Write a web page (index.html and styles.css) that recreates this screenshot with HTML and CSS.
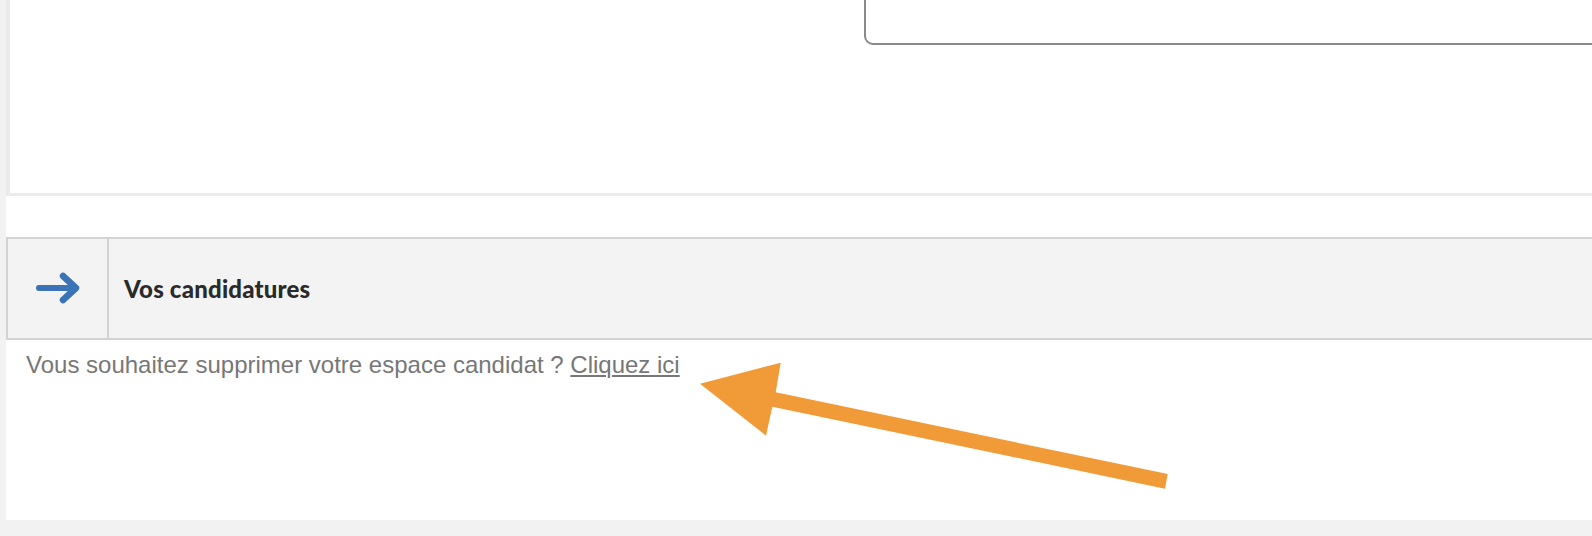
FILE: index.html
```html
<!DOCTYPE html>
<html lang="fr">
<head>
<meta charset="utf-8">
<title>Espace candidat</title>
<link rel="stylesheet" href="styles.css">
</head>
<body>
<div class="page">
  <section class="profile-box">
    <div class="field-card"></div>
  </section>

  <div class="accordion">
    <div class="accordion-icon">
      <svg width="48" height="36" viewBox="0 0 48 36" aria-hidden="true">
        <path d="M4 17 H39" fill="none" stroke="#3a73b6" stroke-width="6" stroke-linecap="round"/>
        <path d="M28 5 L41 17 L28 29" fill="none" stroke="#3a73b6" stroke-width="6.5" stroke-linecap="round" stroke-linejoin="round"/>
      </svg>
    </div>
    <div class="accordion-title">Vos candidatures</div>
  </div>

  <p class="delete-note">Vous souhaitez supprimer votre espace candidat ? <a href="#" class="delete-link">Cliquez ici</a></p>
</div>

<svg class="annotation" width="1592" height="536" viewBox="0 0 1592 536" aria-hidden="true">
  <polygon fill="#f19a38" points="700,383.7 780.7,362.7 775.7,392.3 1167.7,474 1165,488.7 772.3,406.7 766,435.7"/>
</svg>
</body>
</html>
```

FILE: styles.css
```css
html, body {
  margin: 0;
  padding: 0;
}

body {
  background: #f2f2f2;
  width: 1592px;
  height: 536px;
  overflow: hidden;
  position: relative;
  font-family: "Liberation Sans", Arial, sans-serif;
}

.page {
  margin-left: 6px;
  background: #ffffff;
  height: 520px;
  display: flex;
  flex-direction: column;
}

.profile-box {
  box-sizing: border-box;
  height: 196px;
  border-left: 4px solid #ebebeb;
  border-bottom: 3px solid #ebebeb;
  background: #ffffff;
  overflow: hidden;
  display: flex;
  align-items: flex-start;
}

.field-card {
  box-sizing: border-box;
  margin-left: 854px;
  margin-top: -100px;
  height: 145px;
  flex: 0 0 760px;
  border: 2px solid #8a8a8a;
  border-radius: 9px;
}

.accordion {
  box-sizing: border-box;
  margin-top: 41px;
  height: 103px;
  display: flex;
  background: #f3f3f3;
  border-top: 2px solid #d3d3d3;
  border-bottom: 2px solid #d3d3d3;
  border-left: 2px solid #d3d3d3;
}

.accordion-icon {
  width: 99px;
  border-right: 2px solid #d3d3d3;
  display: flex;
  align-items: center;
  justify-content: center;
}

.accordion-icon svg {
  display: block;
  margin-left: 2px;
}

.accordion-title {
  display: flex;
  align-items: center;
  padding-left: 15px;
  font-family: Lato, "Open Sans", sans-serif;
  font-weight: 900;
  font-size: 24px;
  letter-spacing: 0.2px;
  color: #2a2a2a;
}

.delete-note {
  margin: 11px 0 0 0;
  padding-left: 20px;
  font-size: 24px;
  line-height: 28px;
  color: #777777;
}

.delete-link {
  color: #777777;
  text-decoration: underline;
}

.annotation {
  position: absolute;
  left: 0;
  top: 0;
  pointer-events: none;
}
```
